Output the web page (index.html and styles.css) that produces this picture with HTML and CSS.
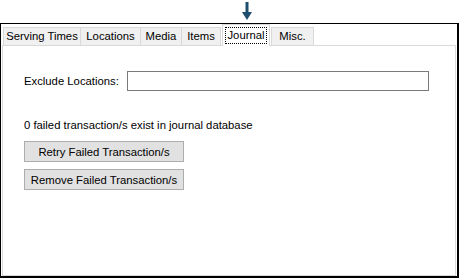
FILE: index.html
```html
<!DOCTYPE html>
<html lang="en">

<head>
    <meta charset="UTF-8">
    <title>Journal</title>
    <link rel="stylesheet" href="styles.css">
</head>

<body>
    <div class="pointer">
        <svg width="12" height="20" viewBox="0 0 12 20">
            <rect x="4.5" y="1" width="3" height="11" fill="#1d4e6e" />
            <polygon points="1,11 11,11 6,19" fill="#1d4e6e" />
        </svg>
    </div>

    <div class="frame">
        <div class="tabs">
            <div class="tab">Serving Times</div>
            <div class="tab">Locations</div>
            <div class="tab">Media</div>
            <div class="tab">Items</div>
            <div class="tab active"><span class="focus">Journal</span></div>
            <div class="tab">Misc.</div>
        </div>

        <div class="panel">
            <div class="field">
                <label>Exclude Locations:</label>
                <input type="text" class="textbox">
            </div>

            <p class="status">0 failed transaction/s exist in journal database</p>

            <button class="btn">Retry Failed Transaction/s</button>
            <button class="btn">Remove Failed Transaction/s</button>
        </div>
    </div>
</body>

</html>
```

FILE: styles.css
```css
html,
body {
    margin: 0;
    padding: 0;
    background: #fff;
    font-family: "Liberation Sans", Arial, sans-serif;
    font-size: 11.3px;
    color: #000;
}

.pointer {
    height: 23px;
    padding-left: 241px;
    padding-top: 1px;
    box-sizing: border-box;
}

.pointer svg {
    display: block;
}

.frame {
    width: 459px;
    height: 255px;
    box-sizing: border-box;
    border: 1px solid #000;
    border-width: 1px 2px 2px 1px;
    padding: 0 1px;
    display: flex;
    flex-direction: column;
}

.tabs {
    display: flex;
    align-items: flex-end;
    height: 21px;
    padding-left: 1px;
}

.tab {
    height: 18px;
    box-sizing: border-box;
    padding: 0;
    line-height: 17px;
    text-align: center;
    background: #f0f0f0;
    border: 1px solid #d9d9d9;
    border-bottom: none;
    margin-right: -1px;
    white-space: nowrap;
}

.tab:nth-child(1) { width: 78px; }
.tab:nth-child(2) { width: 61px; }
.tab:nth-child(3) { width: 42px; }
.tab:nth-child(4) { width: 40px; }
.tab:nth-child(6) { width: 43px; }

.tab.active {
    width: 48px;
    background: #fff;
    padding: 2px 2px 0;
    margin: 0 1px -1px 2px;
    position: relative;
    z-index: 1;
    height: 22px;
}

.focus {
    display: block;
    border: 1px dotted #000;
    line-height: 15px;
}

.panel {
    flex: 1;
    border: 1px solid #d9d9d9;
    background: #fff;
    padding: 25px 0 0 21px;
}

.field {
    display: flex;
    align-items: center;
    gap: 8px;
}

.textbox {
    width: 302px;
    height: 20px;
    box-sizing: border-box;
    border: 1px solid #7a7a7a;
    margin: 0;
    padding: 0 3px;
    font: inherit;
}

.status {
    margin: 27px 0 9px;
    line-height: 14px;
}

.btn {
    display: block;
    width: 160px;
    height: 21px;
    margin: 0 0 7px;
    padding: 0;
    background: #e1e1e1;
    border: 1px solid #adadad;
    font: inherit;
    color: #000;
}
```
